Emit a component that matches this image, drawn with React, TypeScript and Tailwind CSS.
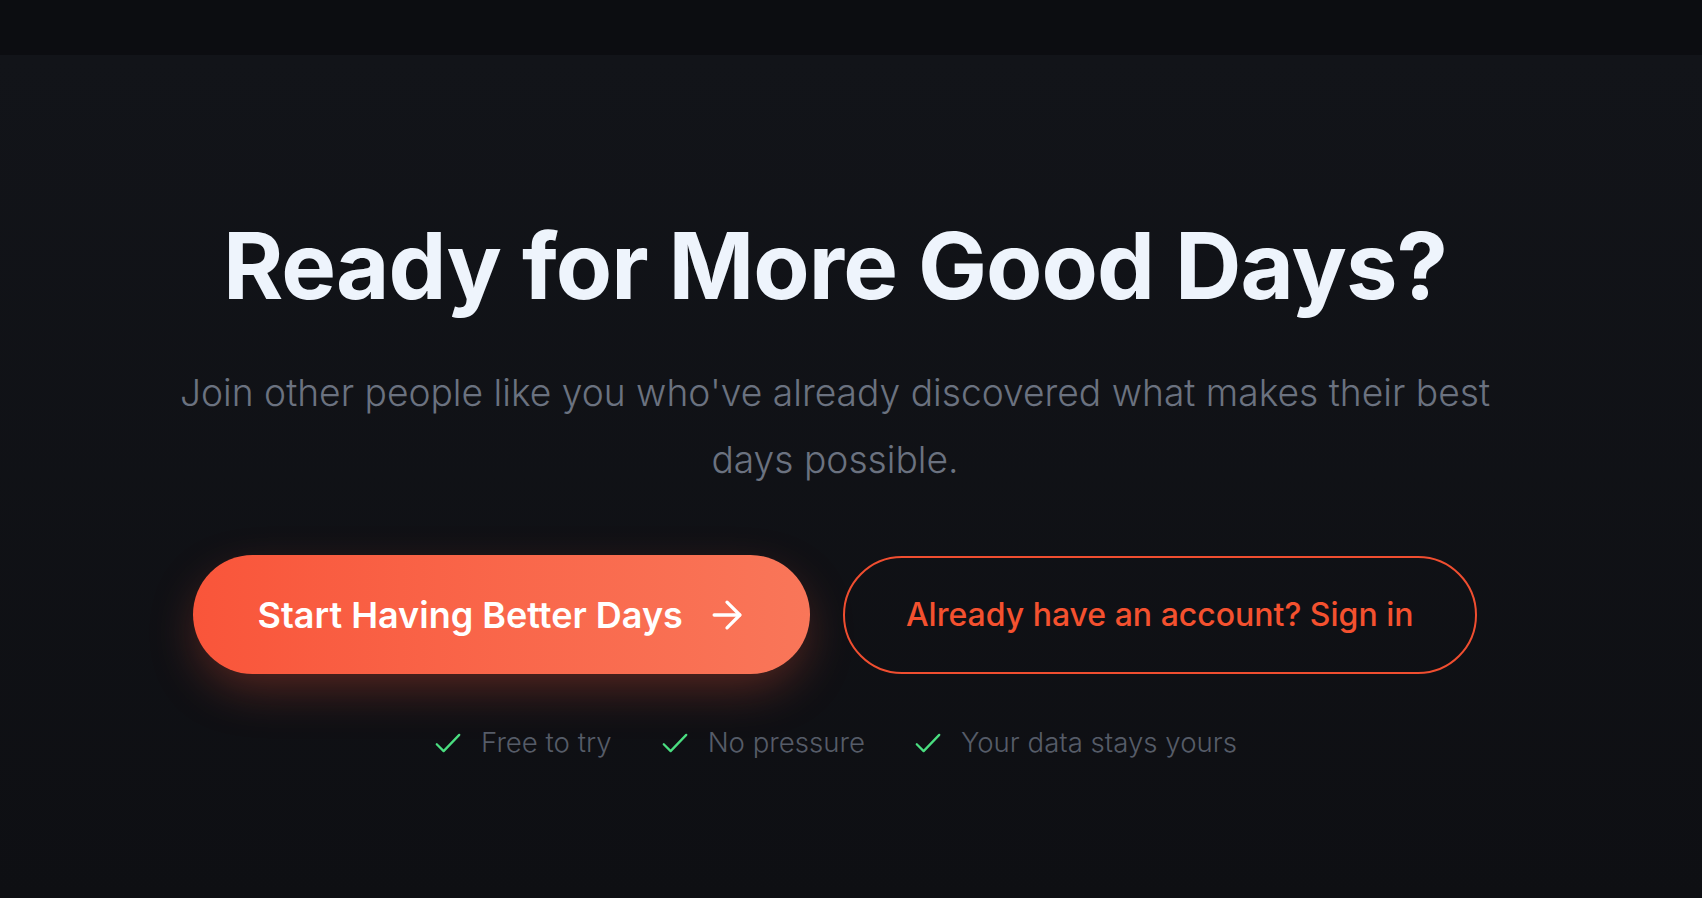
import React from "react";

const ArrowRight = () => (
  <svg
    width="44"
    height="44"
    viewBox="0 0 24 24"
    fill="none"
    stroke="currentColor"
    strokeWidth="1.8"
    strokeLinecap="round"
    strokeLinejoin="round"
  >
    <path d="M5 12h14" />
    <path d="m12 5 7 7-7 7" />
  </svg>
);

const Check = () => (
  <svg
    width="30"
    height="30"
    viewBox="0 0 24 24"
    fill="none"
    stroke="#4ade80"
    strokeWidth="1.8"
    strokeLinecap="round"
    strokeLinejoin="round"
  >
    <path d="M21 5.5 8.5 18.5 3 13" />
  </svg>
);

const perks = ["Free to try", "No pressure", "Your data stays yours"];

const App = () => {
  return (
    <div className="min-h-[898px] bg-[#0c0d11] font-['Inter',sans-serif]">
      <div className="h-[55px] bg-[#0c0d11]" />
      <section className="flex min-h-[843px] flex-col items-center bg-gradient-to-b from-[#121419] to-[#0e0f13] pr-[32px] pt-[160px]">
        <h2 className="text-[92px] font-bold leading-[1.1] tracking-[-0.01em] text-[#eef4fc]">
          Ready for More Good Days?
        </h2>

        <p className="mt-[43px] max-w-[1340px] text-center text-[37.2px] font-light leading-[67px] text-[#6b7280]">
          Join other people like you who've already discovered what makes their
          best days possible.
        </p>

        <div className="mt-[62px] flex items-center gap-[33px]">
          <button className="flex h-[119px] items-center gap-[22px] rounded-full bg-gradient-to-r from-[#f9553a] to-[#f97659] pl-[64px] pr-[61px] text-[36px] font-semibold text-white shadow-[0_18px_50px_-8px_rgba(249,85,58,0.35)]">
            Start Having Better Days
            <ArrowRight />
          </button>
          <button className="flex h-[118px] items-center rounded-full border-2 border-[#f04e30] px-[61px] text-[32px] font-medium text-[#f4512f]">
            Already have an account? Sign in
          </button>
        </div>

        <ul className="mt-[48px] flex items-center gap-[48px]">
          {perks.map((perk) => (
            <li
              key={perk}
              className="flex items-center gap-[18px] text-[27.6px] font-light text-[#565c68]"
            >
              <Check />
              <span>{perk}</span>
            </li>
          ))}
        </ul>
      </section>
    </div>
  );
};

export default App;
